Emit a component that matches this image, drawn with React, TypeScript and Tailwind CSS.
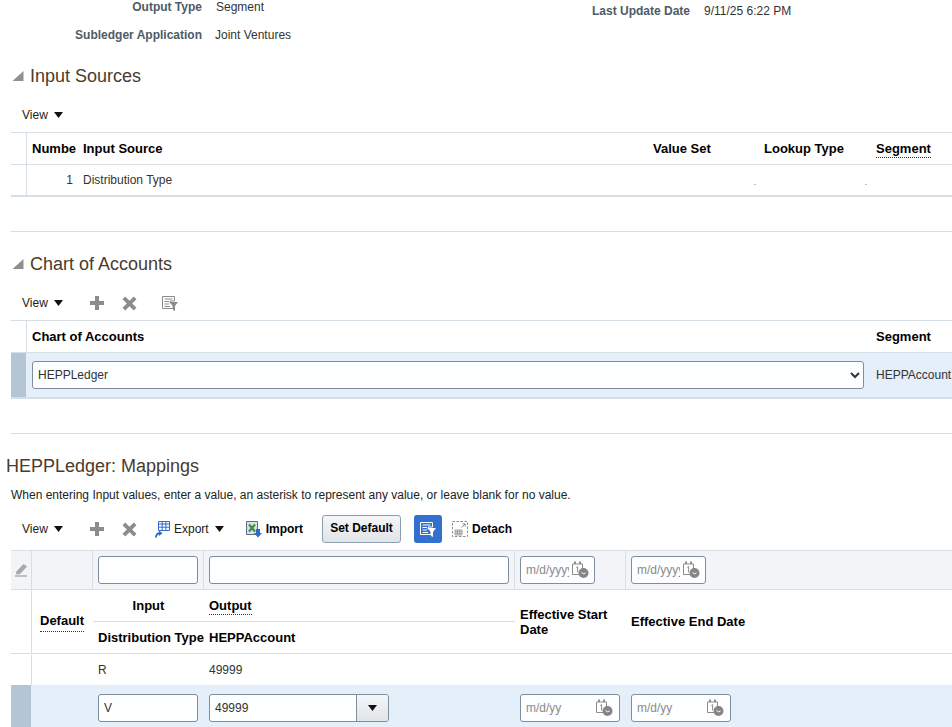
import type { ReactNode } from "react";

const inputBox =
  "h-7 rounded-[3px] border border-[#7e8ea0] bg-[#fdfeff] text-xs text-[#333] outline-none";

function Disclosure() {
  return (
    <svg width="12" height="12" viewBox="0 0 12 12" className="shrink-0">
      <path d="M11.5 1 L11.5 11 L0.5 11 Z" fill="#8f8f8f" />
    </svg>
  );
}

function Caret() {
  return (
    <svg width="9" height="6" viewBox="0 0 9 6" className="shrink-0">
      <path d="M0 0 H9 L4.5 6 Z" fill="#111" />
    </svg>
  );
}

function PlusIcon() {
  return (
    <svg width="14" height="14" viewBox="0 0 14 14">
      <path d="M5 0 H9 V5 H14 V9 H9 V14 H5 V9 H0 V5 H5 Z" fill="#8c8c8c" />
    </svg>
  );
}

function CrossIcon() {
  return (
    <svg width="15" height="15" viewBox="0 0 14 14">
      <path d="M0.5 3 L3 0.5 L7 4.5 L11 0.5 L13.5 3 L9.5 7 L13.5 11 L11 13.5 L7 9.5 L3 13.5 L0.5 11 L4.5 7 Z" fill="#8c8c8c" />
    </svg>
  );
}

function QbeIcon({ color = "#8c8c8c", paper = "#fff" }: { color?: string; paper?: string }) {
  return (
    <svg width="16" height="15" viewBox="0 0 16 15">
      <path d="M0.5 0.5 H12.5 V5 H8 L11 9 V12.5 H0.5 Z" fill={paper} stroke={color} />
      <path d="M2.5 3 H10.5 M2.5 5.5 H7 M2.5 8 H7 M2.5 10.5 H8" stroke={color} strokeWidth="1" />
      <path d="M7 6 H16 L13 10 V15 L11 14 V10 Z" fill={color} />
    </svg>
  );
}

function ExportIcon() {
  return (
    <svg width="16" height="17" viewBox="0 0 16 17">
      <path d="M4.5 0.5 H15.5 V9.5 H4.5 Z" fill="#fff" stroke="#2f6bc4" />
      <path d="M4.5 3 H15.5 M4.5 6.2 H15.5 M8.2 0.5 V9.5 M11.9 0.5 V9.5" stroke="#2f6bc4" />
      <path d="M1 16.5 C1.5 13 2.5 11.5 5 11.2 V9.5 L8.5 12.3 L5 15 V13.4 C3.5 13.6 3 15 2.8 16.5 Z" fill="#2f6bc4" />
    </svg>
  );
}

function ImportIcon() {
  return (
    <svg width="16" height="18" viewBox="0 0 16 18">
      <path d="M0.5 1.5 H11.5 V14.5 H0.5 Z" fill="#d9dfe8" stroke="#5a6f8c" />
      <path d="M3 4.5 L9 11.5 M9 4.5 L3 11.5" stroke="#3f8f3a" strokeWidth="2.2" />
      <path d="M10 9 H14 V13 H16 L12 17.5 L8 13 H10 Z" fill="#2f6bc4" />
    </svg>
  );
}

function DetachIcon() {
  return (
    <svg width="16" height="16" viewBox="0 0 16 16">
      <rect x="0.5" y="0.5" width="15" height="15" fill="none" stroke="#8c8c8c" strokeDasharray="2.5 1.5" />
      <path d="M3 9 H10 V14 H3 Z M3 10.7 H10 M3 12.3 H10 M5.3 9 V14 M7.7 9 V14" fill="none" stroke="#8c8c8c" strokeWidth="0.8" />
      <path d="M9.5 6.5 L13 3 M10.5 2.8 H13.2 V5.5" fill="none" stroke="#8c8c8c" />
    </svg>
  );
}

function PencilIcon() {
  return (
    <svg width="13" height="14" viewBox="0 0 13 14">
      <path d="M1 9 L8.5 1 L12 3.5 L5 11 L1.5 11.5 Z" fill="#a8a8a8" />
      <path d="M0 13 H12" stroke="#8c8c8c" />
    </svg>
  );
}

function CalendarClock() {
  return (
    <svg width="17" height="18" viewBox="0 0 17 18" className="shrink-0">
      <path d="M0.5 3 H10.5 V13.5 H0.5 Z" fill="#fff" stroke="#8c8c8c" />
      <path d="M2 0.5 H4 V3 H2 Z M7 0.5 H9 V3 H7 Z" fill="#8c8c8c" />
      <path d="M4.3 6.5 L5.6 5.6 V11.5" fill="none" stroke="#8c8c8c" />
      <circle cx="11.5" cy="12" r="5" fill="#858585" />
      <path d="M9.5 11.5 L11.5 12.8 L13.5 12" fill="none" stroke="#fff" />
    </svg>
  );
}

function DateField({ width, clip }: { width: string; clip?: boolean }) {
  return (
    <div className={`${inputBox} ${width} flex items-center pl-[5px]`}>
      <input
        placeholder={clip ? "m/d/yyyy" : "m/d/yy"}
        className={`${clip ? "w-[43px]" : "w-[70px]"} min-w-0 bg-transparent text-xs outline-none placeholder:text-[#8a8a8a]`}
      />
      <div className={clip ? "ml-[3px]" : "ml-0"}>
        <CalendarClock />
      </div>
    </div>
  );
}

function Dotted({ children }: { children: ReactNode }) {
  return <span className="border-b border-dotted border-[#333] pb-px">{children}</span>;
}

function SectionTitle({ children }: { children: ReactNode }) {
  return (
    <div className="flex h-6 items-center gap-[6px] pl-3">
      <Disclosure />
      <h2 className="text-lg leading-6 text-[#4a3b2c]">{children}</h2>
    </div>
  );
}

function ViewMenu() {
  return (
    <div className="flex w-[41px] items-center justify-between text-xs text-[#222]">
      <span>View</span>
      <Caret />
    </div>
  );
}

const th = "shrink-0 text-[13px] font-bold text-black";
const line = "border-[#d6dfe6]";

export default function App() {
  return (
    <div className="h-[727px] w-[952px] overflow-hidden bg-white font-['Liberation_Sans',Arial,sans-serif] text-xs text-[#333]">
      {/* Header form */}
      <div className="flex h-[41px] items-start">
        <div className="flex w-[592px] flex-col gap-[14px] pt-0">
          <div className="flex h-[14px] items-center">
            <span className="w-[202px] text-right font-bold text-[#4f5a66]">Output Type</span>
            <span className="ml-[14px]">Segment</span>
          </div>
          <div className="flex h-[14px] items-center">
            <span className="w-[202px] text-right font-bold text-[#4f5a66]">Subledger Application</span>
            <span className="ml-[13px]">Joint Ventures</span>
          </div>
        </div>
        <div className="flex h-[14px] translate-y-[4px] items-center gap-[14px]">
          <span className="font-bold text-[#4f5a66]">Last Update Date</span>
          <span>9/11/25 6:22 PM</span>
        </div>
      </div>

      {/* Input Sources */}
      <div className="mt-[23px]">
        <SectionTitle>Input Sources</SectionTitle>
      </div>
      <div className="mt-[15px] flex h-[24px] items-center pl-[22px]">
        <ViewMenu />
      </div>
      <div className="ml-[11px] mt-[5px]">
        <div className={`flex h-[33px] items-center border-y ${line}`}>
          <div className={`h-full w-[16px] border-r ${line}`} />
          <div className={`${th} w-[51px] overflow-hidden whitespace-nowrap pl-[5px]`}>Numbe</div>
          <div className={`${th} w-[570px] pl-[5px]`}>Input Source</div>
          <div className={`${th} w-[111px] pl-[5px]`}>Value Set</div>
          <div className={`${th} w-[111px] pl-[5px]`}>Lookup Type</div>
          <div className={`${th} pl-[6px]`}>
            <Dotted>Segment</Dotted>
          </div>
        </div>
        <div className={`flex h-[32px] items-center border-b-2 ${line}`}>
          <div className={`h-full w-[16px] border-r ${line}`} />
          <div className="w-[46px] text-right">1</div>
          <div className="w-[575px] pl-[10px]">Distribution Type</div>
          <div className="w-[108px] translate-y-[3px] text-right text-[8px] leading-none">.</div>
          <div className="w-[111px] translate-y-[3px] text-right text-[8px] leading-none">.</div>
        </div>
      </div>
      <div className={`ml-[11px] mt-[34px] border-t ${line}`} />

      {/* Chart of Accounts */}
      <div className="mt-[20px]">
        <SectionTitle>Chart of Accounts</SectionTitle>
      </div>
      <div className="mt-[15px] flex h-[24px] items-center pl-[22px]">
        <ViewMenu />
        <div className="ml-[27px] flex items-center gap-[18px]">
          <PlusIcon />
          <CrossIcon />
        </div>
        <div className="ml-[25px]">
          <QbeIcon />
        </div>
      </div>
      <div className="ml-[11px] mt-[5px]">
        <div className={`flex h-[33px] items-center border-y ${line}`}>
          <div className={`h-full w-[16px] border-r ${line}`} />
          <div className={`${th} w-[843px] pl-[5px]`}>Chart of Accounts</div>
          <div className={`${th} pl-[6px]`}>Segment</div>
        </div>
        <div className="flex h-[46px] items-center border-b-2 border-[#d6dfe6] bg-[#e4effa]">
          <div className="h-full w-[15px] shrink-0 bg-[#b4c6d6]" />
          <div className="w-[844px] shrink-0 pl-[6px]">
            <select className={`${inputBox} w-[832px] pl-[1px] text-[#333]`} defaultValue="HEPPLedger">
              <option>HEPPLedger</option>
            </select>
          </div>
          <div className="shrink-0 whitespace-nowrap pl-[6px]">HEPPAccount1</div>
        </div>
      </div>
      <div className={`ml-[11px] mt-[34px] border-t ${line}`} />

      {/* Mappings */}
      <h2 className="mt-[20px] h-6 pl-[6px] text-lg leading-6 text-[#4a3b2c]">HEPPLedger: Mappings</h2>
      <p className="mt-[10px] h-[14px] pl-[11px] leading-[14px] text-[#222]">
        When entering Input values, enter a value, an asterisk to represent any value, or leave blank for no value.
      </p>
      <div className="mt-[11px] flex h-[32px] items-center pl-[22px] text-[#222]">
        <ViewMenu />
        <div className="ml-[27px] flex items-center gap-[18px]">
          <PlusIcon />
          <CrossIcon />
        </div>
        <div className="ml-[17px] flex items-center gap-[4px]">
          <ExportIcon />
          <span>Export</span>
          <div className="ml-[2px]">
            <Caret />
          </div>
        </div>
        <div className="ml-[22px] flex items-center gap-[4px]">
          <ImportIcon />
          <span className="font-bold text-black">Import</span>
        </div>
        <button className="ml-[19px] h-[28px] w-[79px] rounded-[3px] border border-[#8d9eae] bg-gradient-to-b from-[#f4f6f7] to-[#e1e5e8] pb-[2px] text-xs font-bold text-black">
          Set Default
        </button>
        <div className="ml-[13px] flex h-[28px] w-[28px] items-center justify-center rounded-[3px] bg-[#3170cf]">
          <QbeIcon color="#ffffff" paper="#3170cf" />
        </div>
        <div className="ml-[10px] flex items-center gap-[4px]">
          <DetachIcon />
          <span className="font-bold text-black">Detach</span>
        </div>
      </div>

      <div className="ml-[11px] mt-[5px] w-[941px]">
        {/* Filter row */}
        <div className="flex h-[40px] items-center border-y border-[#d6dfe6] bg-[#f2f4f7]">
          <div className={`flex h-full w-[21px] items-center justify-center border-r ${line}`}>
            <PencilIcon />
          </div>
          <div className={`h-full w-[61px] border-r ${line}`} />
          <div className={`flex h-full w-[111px] items-center pl-[5px] border-r ${line}`}>
            <input className={`${inputBox} w-[100px]`} />
          </div>
          <div className={`flex h-full w-[311px] items-center pl-[5px] border-r ${line}`}>
            <input className={`${inputBox} w-[300px]`} />
          </div>
          <div className={`flex h-full w-[111px] items-center pl-[5px] border-r ${line}`}>
            <DateField width="w-[75px]" clip />
          </div>
          <div className="flex h-full items-center pl-[5px]">
            <DateField width="w-[75px]" clip />
          </div>
        </div>

        {/* Column headers */}
        <div className={`flex h-[64px] border-b ${line}`}>
          <div className={`w-[21px] border-r ${line}`} />
          <div className={`${th} flex w-[61px] items-center pl-[8px] pt-px`}>
            <Dotted>Default</Dotted>
          </div>
          <div className="flex w-[422px] flex-col">
            <div className={`flex h-[32px] items-center border-b ${line}`}>
              <div className={`${th} w-[111px] text-center`}>Input</div>
              <div className={`${th} pl-[5px]`}>
                <Dotted>Output</Dotted>
              </div>
            </div>
            <div className="flex flex-1 items-center">
              <div className={`${th} w-[111px] whitespace-nowrap pl-[5px]`}>Distribution Type</div>
              <div className={`${th} pl-[5px]`}>HEPPAccount</div>
            </div>
          </div>
          <div className={`${th} flex w-[111px] items-center pl-[5px] leading-[15px]`}>
            <span>
              Effective Start
              <br />
              Date
            </span>
          </div>
          <div className={`${th} flex items-center pl-[5px]`}>Effective End Date</div>
        </div>

        {/* Rows */}
        <div className="flex h-[31px] items-center pt-px">
          <div className={`h-full w-[21px] border-r ${line}`} />
          <div className="w-[61px]" />
          <div className="w-[111px] pl-[5px]">R</div>
          <div className="pl-[5px]">49999</div>
        </div>
        <div className="flex h-[42px] items-start bg-[#e4effa] pt-[9px]">
          <div className="-mt-[9px] h-[42px] w-[20px] bg-[#b4c6d6]" />
          <div className="w-[62px]" />
          <div className="flex w-[111px] pl-[5px]">
            <input defaultValue="V" className={`${inputBox} w-[100px] pl-[5px]`} />
          </div>
          <div className="flex w-[311px] pl-[5px]">
            <div className={`${inputBox} flex w-[180px] overflow-hidden`}>
              <input defaultValue="49999" className="w-[146px] bg-transparent pl-[5px] outline-none" />
              <div className="flex flex-1 items-center justify-center border-l border-[#7e8ea0] bg-gradient-to-b from-[#f4f6f7] to-[#e1e5e8]">
                <Caret />
              </div>
            </div>
          </div>
          <div className="w-[111px] pl-[5px]">
            <DateField width="w-[100px]" />
          </div>
          <div className="pl-[5px]">
            <DateField width="w-[100px]" />
          </div>
        </div>
      </div>
    </div>
  );
}
